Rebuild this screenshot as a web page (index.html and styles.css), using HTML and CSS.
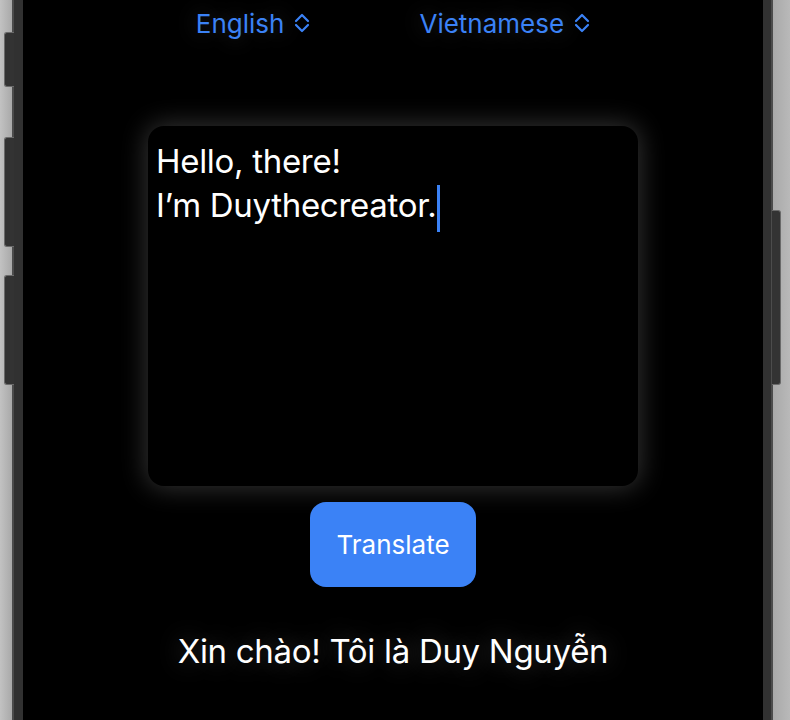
FILE: index.html
```html
<!DOCTYPE html>
<html lang="en">
<head>
<meta charset="utf-8">
<title>Translator</title>
<link rel="stylesheet" href="styles.css">
</head>
<body>
<div class="stage">
  <div class="side-btn left b1"></div>
  <div class="side-btn left b2"></div>
  <div class="side-btn left b3"></div>
  <div class="side-btn right b4"></div>
  <div class="phone">
    <div class="bezel">
      <main class="screen">
        <div class="pickers">
          <div class="picker">
            <span class="picker-label">English</span>
            <svg class="chev" viewBox="0 0 16 20" width="16" height="20"><polyline points="2,8 8,2 14,8"/><polyline points="2,12 8,18 14,12"/></svg>
          </div>
          <div class="picker">
            <span class="picker-label">Vietnamese</span>
            <svg class="chev" viewBox="0 0 16 20" width="16" height="20"><polyline points="2,8 8,2 14,8"/><polyline points="2,12 8,18 14,12"/></svg>
          </div>
        </div>
        <div class="editor">
          <div class="editor-text">Hello, there!<br>I’m Duythecreator.<span class="caret"></span></div>
        </div>
        <button class="translate-btn">Translate</button>
        <p class="result">Xin chào! Tôi là Duy Nguyễn</p>
      </main>
    </div>
  </div>
</div>
</body>
</html>
```
FILE: styles.css
```css
html, body {
  margin: 0;
  padding: 0;
  height: 100%;
  overflow: hidden;
}
body {
  background: linear-gradient(90deg, #c2c2c2 0px, #a9a9a9 12px, #a9a9a9 773px, #b9b9b9 790px);
  font-family: Inter, "Noto Sans", sans-serif;
}
.stage {
  position: relative;
  height: 720px;
}
.phone {
  height: 720px;
  margin: 0 17px 0 12px;
  border-left: 2px solid #4c4c4c;
  border-right: 2px solid #4c4c4c;
  box-sizing: border-box;
}
.bezel {
  height: 100%;
  background: #313131;
  padding: 0 8px 0 9px;
  box-sizing: border-box;
}
.screen {
  height: 100%;
  background: #000;
  display: flex;
  flex-direction: column;
  align-items: center;
  padding-top: 8px;
  box-sizing: border-box;
}
.side-btn {
  position: absolute;
  background: #333;
  border: 1px solid #6a6a6a;
  box-sizing: border-box;
}
.side-btn.left {
  left: 4px;
  width: 10px;
  border-right: none;
  border-radius: 3px 0 0 3px;
}
.side-btn.right {
  left: 772px;
  width: 9px;
  border-left: none;
  border-radius: 0 3px 3px 0;
}
.b1 { top: 32px; height: 55px; }
.b2 { top: 137px; height: 110px; }
.b3 { top: 275px; height: 110px; }
.b4 { top: 210px; height: 175px; }

.pickers {
  display: flex;
  gap: 109px;
  justify-content: center;
  text-shadow: 0 0 22px rgba(255,255,255,0.22);
}
.picker {
  display: flex;
  align-items: center;
  gap: 10px;
  color: #3b82f6;
  font-size: 26px;
  line-height: 31px;
}
.chev {
  fill: none;
  stroke: #3b82f6;
  stroke-width: 2.2;
  stroke-linecap: round;
  stroke-linejoin: round;
  margin-top: -2px;
}
.editor {
  margin-top: 87px;
  width: 490px;
  height: 360px;
  background: #000;
  border-radius: 16px;
  box-shadow: 0 0 26px 2px rgba(255,255,255,0.2);
  padding: 13px 8px;
  box-sizing: border-box;
}
.editor-text {
  color: #fff;
  font-size: 33px;
  line-height: 44px;
  letter-spacing: -0.3px;
}
.caret {
  display: inline-block;
  width: 3px;
  height: 47px;
  margin: 2px 0 -5px 1px;
  background: #3b82f6;
  vertical-align: top;
}
.translate-btn {
  margin-top: 16px;
  width: 166px;
  height: 85px;
  border: none;
  border-radius: 16px;
  background: #3b82f6;
  color: #fff;
  font-family: Inter, "Noto Sans", sans-serif;
  font-size: 26px;
  padding: 0;
}
.result {
  margin: 42px 0 0;
  color: #fff;
  font-size: 33px;
  line-height: 44px;
  letter-spacing: -0.3px;
  text-shadow: 0 0 24px rgba(255,255,255,0.25);
}
```
